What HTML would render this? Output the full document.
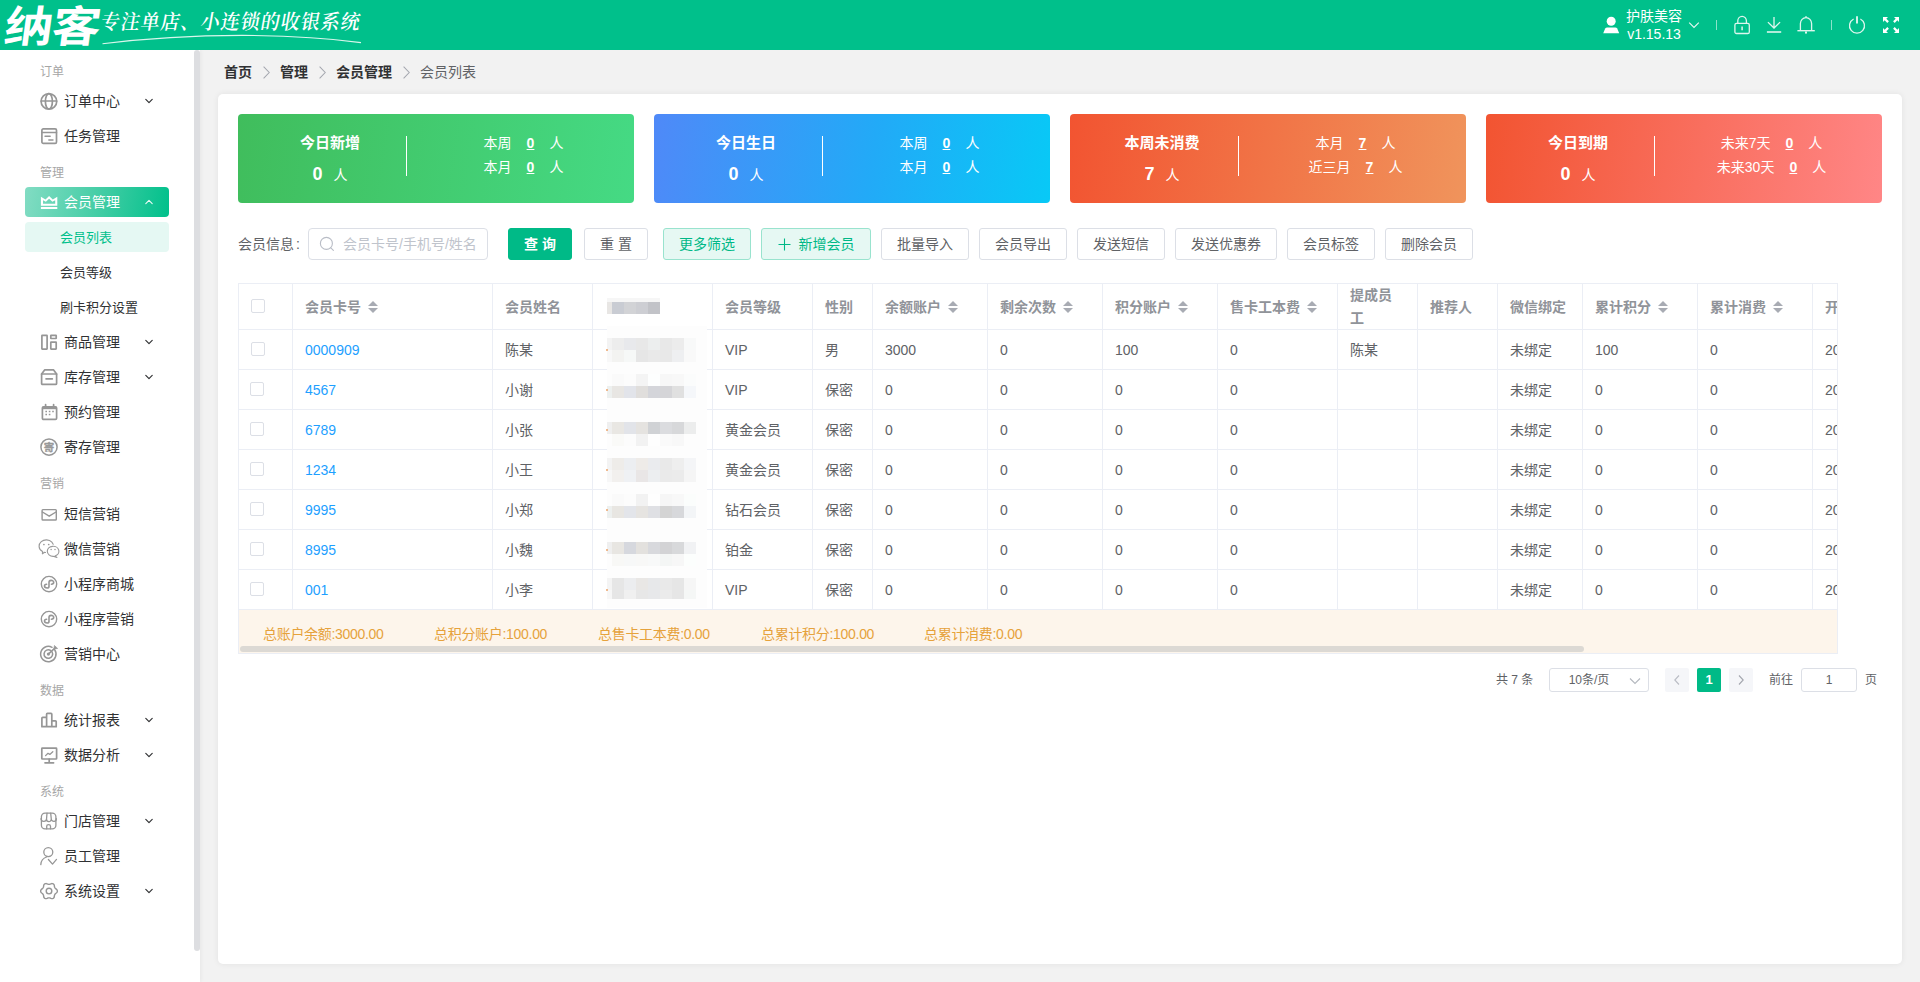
<!DOCTYPE html>
<html lang="zh-CN">
<head>
<meta charset="utf-8">
<title>会员列表</title>
<style>
*{box-sizing:border-box;margin:0;padding:0}
html,body{width:1920px;height:982px;overflow:hidden;background:#f2f2f2}
body{font-family:"Liberation Sans","Noto Sans CJK SC",sans-serif;font-size:14px;color:#606266;position:relative}
.abs{position:absolute}
/* header */
#hd{position:absolute;z-index:2;left:0;top:0;width:1920px;height:50px;background:#00c08b;color:#fff}
#logo{position:absolute;left:1px;top:-1px;font-family:"Liberation Sans","Noto Sans CJK SC",sans-serif;font-weight:700;font-size:43px;line-height:56px;letter-spacing:-1px;transform:scaleX(1.13) skewX(-7deg);transform-origin:left bottom;white-space:nowrap}
#slogan{position:absolute;left:101px;top:9px;font-family:"Liberation Serif","Noto Serif CJK SC",serif;font-weight:600;font-size:19px;line-height:28px;letter-spacing:1px;transform:skewX(-10deg) scaleY(1.08);transform-origin:left center;white-space:nowrap}
#hd svg{position:absolute;overflow:visible}
.uname{position:absolute;left:1614px;width:80px;text-align:center;font-size:14px;line-height:18px;white-space:nowrap}
.hdiv{position:absolute;top:20px;width:1px;height:10px;background:rgba(255,255,255,.55)}
/* sidebar */
#sb{position:absolute;left:0;top:50px;width:200px;height:932px;background:#fff;box-shadow:1px 0 4px rgba(0,0,0,.05)}
#sbthumb{position:absolute;left:194px;top:0;width:6px;height:901px;background:#dddee1;border-radius:3px}
.grp{position:absolute;left:40px;font-size:12px;line-height:16px;color:#a6a6a6}
.mi{position:absolute;left:25px;width:144px;height:30px;border-radius:4px;font-size:14px;line-height:30px;color:#303133;white-space:nowrap}
.mi svg.ic{position:absolute;left:15px;top:6px;width:18px;height:18px;overflow:visible;fill:none;stroke:#969696;stroke-width:1.7;stroke-linecap:round;stroke-linejoin:round}
.mi .t{position:absolute;left:39px;top:0}
.mi svg.ar{position:absolute;left:120px;top:11px;width:8px;height:8px;fill:none;stroke:#303133;stroke-width:1.15;stroke-linecap:round;stroke-linejoin:round}
.mi.on{background:linear-gradient(100deg,#82dcc3 0%,#3fcca3 55%,#00c08b 100%);color:#fff}
.mi.on svg.ic{stroke:#fff}
.mi.on svg.ar{stroke:#fff;stroke-width:1.1;opacity:.92}
.si{position:absolute;left:25px;width:144px;height:30px;border-radius:4px;font-size:13px;line-height:32px;color:#303133;padding-left:35px;white-space:nowrap}
.si.on{background:#e5f8f3;color:#00c08b}
/* main */
#bc{position:absolute;left:224px;top:62px;font-size:14px;line-height:20px;white-space:nowrap;color:#606266}
#bc b{color:#303133;font-weight:700}
#bc i{display:inline-block;width:28px;height:20px;vertical-align:top;position:relative}
#bc i svg{position:absolute;left:11px;top:3.5px}
#card{position:absolute;left:218px;top:94px;width:1684px;height:870px;background:#fff;border-radius:5px;box-shadow:0 0 6px rgba(0,0,0,.07)}

/* stats */
.stat{position:absolute;top:114px;width:396px;height:89px;border-radius:4px;color:#fff}
.stat .sl{position:absolute;left:16px;top:0;width:152px;text-align:center}
.stat .st{position:absolute;left:0;width:152px;top:18px;font-size:15px;line-height:22px;font-weight:700;white-space:nowrap}
.stat .sn{position:absolute;left:0;width:152px;top:46px;line-height:28px;white-space:nowrap}
.stat .sn b{font-size:18px;font-weight:700;margin-right:11px;vertical-align:baseline}
.stat .sn span{font-size:14px}
.stat .sd{position:absolute;left:168px;top:22px;width:1px;height:40px;background:#fff}
.stat .srs{position:absolute;left:169px;width:233px;top:17px;text-align:center}
.stat .sr{height:24px;line-height:24px;font-size:14px;white-space:nowrap}
.stat .sr b{font-weight:700;text-decoration:underline;margin:0 15px}
/* toolbar */
.lbl{position:absolute;line-height:32px;font-size:14px;color:#606266;white-space:nowrap}
.inp{position:absolute;height:32px;border:1px solid #dcdfe6;border-radius:4px;background:#fff;line-height:30px;font-size:14px;color:#c0c4cc;white-space:nowrap}
.inp svg{position:absolute;left:10px;top:7px}
.inp span{position:absolute;left:34px;top:0}
.btn{position:absolute;top:228px;height:32px;border:1px solid #dcdfe6;border-radius:3px;background:#fff;color:#606266;font-size:14px;line-height:30px;text-align:center;white-space:nowrap}
.btn.pri{background:#00ba87;border-color:#00ba87;color:#fff;font-weight:700}
.btn.lt{background:#e6f8f3;border-color:#99e3ce;color:#00b887}
.btn svg{margin-right:8px;vertical-align:-1.5px}
/* table */
#tw{position:absolute;left:238px;top:283px;width:1600px;height:371px;border:1px solid #ebeef5;overflow:hidden;background:#fff}
#tb{position:absolute;left:0;top:0;border-collapse:separate;border-spacing:0;table-layout:fixed;width:1734px;font-size:14px;color:#606266}
#tb th,#tb td{border-right:1px solid #ebeef5;border-bottom:1px solid #ebeef5;padding:0;text-align:left;vertical-align:middle;overflow:hidden;white-space:nowrap}
#tb th{height:46px;color:#909399;font-weight:700;line-height:23px}
#tb td{height:40px;line-height:23px}
#tb .c{padding-left:12px;position:relative;top:1px}
#tb .lk{color:#1e9fff}
#tb .ck{padding-left:12px}
#tb tr+tr td.ck{padding-left:11px}
.cb{display:block;width:14px;height:14px;border:1px solid #dcdfe6;border-radius:2px;background:#fff;position:relative;top:-1px}
.so{display:inline-block;position:relative;width:10px;height:14px;margin-left:7px;vertical-align:-2px}
.so:before,.so:after{content:"";position:absolute;left:0;border:5px solid transparent}
.so:before{top:-4px;border-bottom-color:#a8abb3}
.so:after{top:8px;border-top-color:#a8abb3}
#mz{position:absolute;left:0;top:0}
#mz i{position:absolute;display:block}
#sum{position:absolute;left:0;top:326px;width:1600px;height:43px;background:#fdf5eb;color:#e6a23c;font-size:14px;line-height:46px;white-space:nowrap;padding-left:0}
#sum span{position:absolute;top:1px;letter-spacing:-0.3px}
#hs{position:absolute;left:1px;top:36px;width:1344px;height:6px;border-radius:3px;background:#dcd9d4}
/* pagination */
.pg{position:absolute;height:24px;line-height:24px;font-size:12px;color:#606266;white-space:nowrap}
.psel{position:absolute;width:100px;height:24px;border:1px solid #dcdfe6;border-radius:3px;font-size:12px;line-height:22px;color:#606266;background:#fff}
.psel span{position:absolute;left:0;width:78px;text-align:center}
.psel svg{position:absolute;left:79px;top:8px}
.pb{position:absolute;width:24px;height:24px;border-radius:2px;background:#f5f6f9;color:#606266;font-size:13px;font-weight:700;line-height:24px;text-align:center}
.pb svg{position:absolute;left:8px;top:6px}
.pb.on{background:#00ba87;color:#fff}
.pin{position:absolute;width:56px;height:24px;border:1px solid #dcdfe6;border-radius:3px;font-size:12px;line-height:22px;color:#606266;text-align:center;background:#fff}
</style>
</head>
<body>
<div id="hd">
  <div id="logo">纳客</div>
  <div id="slogan">专注单店、小连锁的收银系统</div>
  <svg style="left:102px;top:34px" width="262" height="12" viewBox="0 0 262 12"><path d="M0.5 9.8 C55 3 100 1.5 140 1.4 C185 1.5 225 4 259 8.6" fill="none" stroke="#d9f6ec" stroke-width="1.1"/></svg>
  <svg style="left:1602px;top:16px" width="18" height="18" viewBox="0 0 18 18"><circle cx="9.2" cy="5.3" r="4.5" fill="#fff"/><path d="M1.2 17.2 L3.2 12.6 Q3.8 11.4 5.2 11.4 H13.2 Q14.6 11.4 15.2 12.6 L17.2 17.2 Z" fill="#fff"/></svg>
  <div class="uname" style="top:7px">护肤美容</div>
  <div class="uname" style="top:25px">v1.15.13</div>
  <svg style="left:1688px;top:21px" width="12" height="8" viewBox="0 0 12 8"><path d="M1.2 1.7 L6 6.5 L10.8 1.7" fill="none" stroke="#e9faf4" stroke-width="1.1"/></svg>
  <div class="hdiv" style="left:1716px"></div>
  <svg style="left:1733px;top:15px" width="18" height="20" viewBox="0 0 18 20" fill="none" stroke="#ddf6ee" stroke-width="1.3"><rect x="1.9" y="8.3" width="14.4" height="10.2" rx="1.6"/><path d="M4.8 8.2 V5.8 A4.2 4.4 0 0 1 13.4 5.8 V8.2"/><path d="M9.1 11.4 V15.3" stroke-width="1.5"/></svg>
  <svg style="left:1765px;top:15px" width="18" height="20" viewBox="0 0 18 20" fill="none" stroke="#ddf6ee" stroke-width="1.3"><path d="M9 2 V12.8 M2.9 7.1 L9 13 L15.1 7.1"/><path d="M1.9 17 H16.2" stroke-width="1.6"/></svg>
  <svg style="left:1796px;top:15px" width="20" height="20" viewBox="0 0 20 20" fill="none" stroke="#ddf6ee" stroke-width="1.3"><path d="M4.4 15.6 V8.6 A5.6 6 0 0 1 15.6 8.6 V15.6"/><path d="M1.4 15.7 H18.8" stroke-width="1.4"/><path d="M10 1.2 V2.6 M9 17.2 H11" stroke-width="1.6"/><path d="M9.3 18.3 H10.7" stroke-width="1"/></svg>
  <div class="hdiv" style="left:1831px"></div>
  <svg style="left:1847px;top:15px" width="20" height="20" viewBox="0 0 20 20" fill="none" stroke="#ddf6ee" stroke-width="1.3"><path d="M6.6 4 A7.5 7.5 0 1 0 13.4 4"/><path d="M10 1.2 V8.6" stroke-width="1.9"/></svg>
  <svg style="left:1882px;top:16px" width="18" height="18" viewBox="0 0 18 18" fill="#fff" stroke="none"><path d="M1 1 H6 L4.3 2.7 L6.9 5.3 L5.3 6.9 L2.7 4.3 L1 6 Z"/><path d="M17 1 V6 L15.3 4.3 L12.7 6.9 L11.1 5.3 L13.7 2.7 L12 1 Z"/><path d="M1 17 V12 L2.7 13.7 L5.3 11.1 L6.9 12.7 L4.3 15.3 L6 17 Z"/><path d="M17 17 H12 L13.7 15.3 L11.1 12.7 L12.7 11.1 L15.3 13.7 L17 12 Z"/></svg>
</div>
<div id="sb">
  <div id="sbthumb"></div>
  <div class="grp" style="top:14px">订单</div>
  <div class="mi" style="top:36px"><svg class="ic" viewBox="0 0 18 18"><circle cx="8.9" cy="9.4" r="7.8"/><ellipse cx="8.9" cy="9.4" rx="3.5" ry="7.8"/><path d="M1.2 9 H16.6"/></svg><span class="t">订单中心</span><svg class="ar" viewBox="0 0 8 8"><path d="M0.8 2.4 L4 5.6 L7.2 2.4"/></svg></div>
  <div class="mi" style="top:71px"><svg class="ic" viewBox="0 0 18 18"><rect x="1.9" y="1.9" width="14.6" height="14.4" rx="1.4"/><path d="M2 5.5 H16.4"/><path d="M5 9.2 H10.2 M8.8 13 H13" stroke-width="1.4"/></svg><span class="t">任务管理</span></div>
  <div class="grp" style="top:115px">管理</div>
  <div class="mi on" style="top:137px"><svg class="ic" viewBox="0 0 18 18"><path fill-rule="evenodd" fill="#fff" stroke="none" d="M0.9 3.7 L5.5 6.4 L9.1 2.9 L12.8 6.4 L17.3 3.7 V12.7 H0.9 Z M3 7.3 L5.85 8.85 L9.1 5.7 L12.4 8.85 L15.2 7.3 V10.7 H3 Z M0.9 14.1 H17.3 V15.9 H0.9 Z"/></svg><span class="t">会员管理</span><svg class="ar" viewBox="0 0 8 8"><path d="M0.8 5.6 L4 2.4 L7.2 5.6"/></svg></div>
  <div class="si on" style="top:172px">会员列表</div>
  <div class="si" style="top:207px">会员等级</div>
  <div class="si" style="top:242px">刷卡积分设置</div>
  <div class="mi" style="top:277px"><svg class="ic" viewBox="0 0 18 18"><rect x="1.9" y="2.4" width="5.2" height="13.7" rx="0.3" stroke-linejoin="miter"/><rect x="10.8" y="2.4" width="5.4" height="3.1" rx="0.3" stroke-linejoin="miter"/><rect x="10.8" y="9.1" width="5.4" height="7" rx="0.3" stroke-linejoin="miter"/></svg><span class="t">商品管理</span><svg class="ar" viewBox="0 0 8 8"><path d="M0.8 2.4 L4 5.6 L7.2 2.4"/></svg></div>
  <div class="mi" style="top:312px"><svg class="ic" viewBox="0 0 18 18"><path d="M1.6 6 L4.6 1.9 H13.6 L16.6 6"/><path d="M1.6 6 H16.6 V15.4 Q16.6 16.4 15.6 16.4 H2.6 Q1.6 16.4 1.6 15.4 Z"/><path d="M6 10.9 H12.4" stroke-width="1.6"/></svg><span class="t">库存管理</span><svg class="ar" viewBox="0 0 8 8"><path d="M0.8 2.4 L4 5.6 L7.2 2.4"/></svg></div>
  <div class="mi" style="top:347px"><svg class="ic" viewBox="0 0 18 18"><rect x="2.4" y="3.8" width="14.2" height="12.6" rx="1.2"/><path d="M2.4 5 H16.6" stroke-width="2.4" stroke-linecap="butt"/><path d="M5.6 1.6 V4 M13.6 1.6 V4"/><path d="M5.4 8.4 H7 M8.8 8.4 H10.4 M12.2 8.4 H13.8 M5.4 11.6 H7 M8.8 11.6 H10.4" stroke-width="1.5" stroke-linecap="butt"/></svg><span class="t">预约管理</span></div>
  <div class="mi" style="top:382px"><svg class="ic" viewBox="0 0 18 18"><circle cx="9" cy="9.1" r="8.1" stroke-width="1.5"/><text x="9" y="12.9" text-anchor="middle" font-size="10.5" font-weight="700" stroke="#999" stroke-width="0.35" fill="#999" font-family="Liberation Sans,Noto Sans CJK SC,sans-serif">寄</text></svg><span class="t">寄存管理</span></div>
  <div class="grp" style="top:426px">营销</div>
  <div class="mi" style="top:449px"><svg class="ic" viewBox="0 0 18 18"><rect x="2.1" y="4.6" width="14.2" height="10.4" rx="0.8" stroke-width="1.4"/><path d="M2.4 7 L9.2 11.2 L16 7" stroke-width="1.4"/></svg><span class="t">短信营销</span></div>
  <div class="mi" style="top:484px"><svg class="ic" viewBox="0 0 18 18"><g stroke="#9a9a9a" stroke-width="1.15"><path d="M-0.9 6.4 A7.2 6.3 0 1 1 4.6 12.3 L2.4 13.8 L2.6 11.6 A7.2 6.3 0 0 1 -0.9 6.4 Z"/><ellipse cx="13.1" cy="11.3" rx="6.6" ry="5.8" fill="#fff" stroke="#fff" stroke-width="1.6"/><path d="M7.3 11.3 A5.8 5 0 1 1 15 16 L16.9 17.4 L13.1 16.3 A5.8 5 0 0 1 7.3 11.3 Z" fill="#fff"/></g><g fill="#999" stroke="none"><circle cx="3.9" cy="4.5" r="0.85"/><circle cx="8.7" cy="4.5" r="0.85"/><circle cx="11.1" cy="9.5" r="0.75"/><circle cx="15" cy="9.5" r="0.75"/></g></svg><span class="t">微信营销</span></div>
  <div class="mi" style="top:519px"><svg class="ic" viewBox="0 0 18 18"><circle cx="9" cy="9.1" r="7.7" stroke-width="1.4"/><path d="M11.4 9.3 C12.6 9.2 13.7 8.4 13.7 7.3 C13.7 6 12.4 5.3 11 5.4 C9.6 5.5 9 6.4 9 7.6 V11.2 C9 12.3 8.4 13 7.1 13 C5.6 13 4.5 12.2 4.5 11.1 C4.5 10 5.4 9.3 6.6 9.2" stroke-width="1.6"/></svg><span class="t">小程序商城</span></div>
  <div class="mi" style="top:554px"><svg class="ic" viewBox="0 0 18 18"><circle cx="9" cy="9.1" r="7.7" stroke-width="1.4"/><path d="M11.4 9.3 C12.6 9.2 13.7 8.4 13.7 7.3 C13.7 6 12.4 5.3 11 5.4 C9.6 5.5 9 6.4 9 7.6 V11.2 C9 12.3 8.4 13 7.1 13 C5.6 13 4.5 12.2 4.5 11.1 C4.5 10 5.4 9.3 6.6 9.2" stroke-width="1.6"/></svg><span class="t">小程序营销</span></div>
  <div class="mi" style="top:589px"><svg class="ic" viewBox="0 0 18 18"><path d="M14.6 4.6 A7.7 7.7 0 1 1 12 2.3" stroke-width="1.5"/><path d="M12 6.8 A4.3 4.3 0 1 1 10.6 5.4" stroke-width="1.5"/><circle cx="8.4" cy="9.1" r="1.6" fill="#999" stroke="none"/><path d="M8.6 8.9 L15.4 2.6" stroke-width="1.5"/><path d="M14.4 0.9 L14 3.9 L17.2 3.5 Z" fill="#999" stroke-width="0.8"/></svg><span class="t">营销中心</span></div>
  <div class="grp" style="top:633px">数据</div>
  <div class="mi" style="top:655px"><svg class="ic" viewBox="0 0 18 18"><path d="M1.9 15.7 V7.1 Q1.9 6.3 2.7 6.3 H6.6 M6.6 15.7 V3.2 Q6.6 2.4 7.4 2.4 H11 Q11.8 2.4 11.8 3.2 V15.7 M11.8 9.8 H15.4 Q16.2 9.8 16.2 10.6 V15.7 M1.9 15.7 H16.2"/></svg><span class="t">统计报表</span><svg class="ar" viewBox="0 0 8 8"><path d="M0.8 2.4 L4 5.6 L7.2 2.4"/></svg></div>
  <div class="mi" style="top:690px"><svg class="ic" viewBox="0 0 18 18"><rect x="1.8" y="2.2" width="14.8" height="10.8" rx="0.6"/><path d="M9.2 13.2 V16.6 M5 16.8 H13.6"/><path d="M5.6 9.6 L8 7.3 L9.8 8.4 L12.8 5.8" stroke-width="1.3"/></svg><span class="t">数据分析</span><svg class="ar" viewBox="0 0 8 8"><path d="M0.8 2.4 L4 5.6 L7.2 2.4"/></svg></div>
  <div class="grp" style="top:734px">系统</div>
  <div class="mi" style="top:756px"><svg class="ic" viewBox="0 0 18 18"><rect x="1.4" y="1.1" width="14.5" height="15.8" rx="3.6" stroke-width="1.3"/><path d="M7 1.2 L6.5 7.2 M10.7 1.2 L11.3 7.2 M1 6.6 A2.75 2.6 0 0 0 6.5 7 A2.4 2.6 0 0 0 11.3 7 A2.5 2.6 0 0 0 16.3 6.6" stroke-width="1.3"/><path d="M6.7 16.8 V14.2 Q6.7 12.6 8.6 12.6 Q10.5 12.6 10.5 14.2 V16.8" stroke-width="1.3"/></svg><span class="t">门店管理</span><svg class="ar" viewBox="0 0 8 8"><path d="M0.8 2.4 L4 5.6 L7.2 2.4"/></svg></div>
  <div class="mi" style="top:791px"><svg class="ic" viewBox="0 0 18 18"><circle cx="8.3" cy="5.1" r="4.5" stroke-width="1.3"/><path d="M0.8 17.6 Q1.2 11.6 6.6 10" stroke-width="1.3"/><path d="M8.4 12.5 L12.5 17.1 L16.5 12.4" stroke-width="1.3"/></svg><span class="t">员工管理</span></div>
  <div class="mi" style="top:826px"><svg class="ic" viewBox="0 0 18 18"><path d="M17.35 9.10 L17.24 9.82 L16.92 10.50 L16.29 11.05 L15.63 11.51 L15.19 11.99 L14.85 12.47 L14.59 13.02 L14.41 13.64 L14.34 14.44 L14.17 15.26 L13.75 15.88 L13.18 16.33 L12.50 16.60 L11.75 16.66 L10.95 16.39 L10.23 16.05 L9.59 15.90 L9.00 15.85 L8.41 15.90 L7.77 16.05 L7.05 16.39 L6.25 16.66 L5.50 16.60 L4.83 16.33 L4.25 15.88 L3.83 15.26 L3.66 14.44 L3.59 13.64 L3.41 13.02 L3.15 12.47 L2.81 11.99 L2.37 11.51 L1.71 11.05 L1.08 10.50 L0.76 9.82 L0.65 9.10 L0.76 8.38 L1.08 7.70 L1.71 7.15 L2.37 6.69 L2.81 6.21 L3.15 5.72 L3.41 5.18 L3.59 4.56 L3.66 3.76 L3.83 2.94 L4.25 2.32 L4.82 1.87 L5.50 1.60 L6.25 1.54 L7.05 1.81 L7.77 2.15 L8.41 2.30 L9.00 2.35 L9.59 2.30 L10.23 2.15 L10.95 1.81 L11.75 1.54 L12.50 1.60 L13.18 1.87 L13.75 2.32 L14.17 2.94 L14.34 3.76 L14.41 4.56 L14.59 5.18 L14.85 5.72 L15.19 6.21 L15.63 6.69 L16.29 7.15 L16.92 7.70 L17.24 8.38 Z" stroke-width="1.4"/><circle cx="9" cy="9.1" r="2.8" stroke-width="1.4"/></svg><span class="t">系统设置</span><svg class="ar" viewBox="0 0 8 8"><path d="M0.8 2.4 L4 5.6 L7.2 2.4"/></svg></div>
</div>
<div id="bc"><b>首页</b><i><svg width="7" height="13" viewBox="0 0 7 13"><path d="M0.6 0.6 L6.2 6.5 L0.6 12.4" fill="none" stroke="#a4a7af" stroke-width="1.05"/></svg></i><b>管理</b><i><svg width="7" height="13" viewBox="0 0 7 13"><path d="M0.6 0.6 L6.2 6.5 L0.6 12.4" fill="none" stroke="#a4a7af" stroke-width="1.05"/></svg></i><b>会员管理</b><i><svg width="7" height="13" viewBox="0 0 7 13"><path d="M0.6 0.6 L6.2 6.5 L0.6 12.4" fill="none" stroke="#a4a7af" stroke-width="1.05"/></svg></i>会员列表</div>
<div id="card"></div>
<!--MAIN-->
<div class="stat" style="left:238px;background:linear-gradient(98deg,#40bd5c 0%,#45da84 100%)"><div class="sl"><div class="st">今日新增</div><div class="sn"><b>0</b><span>人</span></div></div><i class="sd"></i><div class="srs"><div class="sr"><span>本周</span><b>0</b><span>人</span></div><div class="sr"><span>本月</span><b>0</b><span>人</span></div></div></div>
<div class="stat" style="left:654px;background:linear-gradient(98deg,#4f89f8 0%,#22aaf7 55%,#08c9f6 100%)"><div class="sl"><div class="st">今日生日</div><div class="sn"><b>0</b><span>人</span></div></div><i class="sd"></i><div class="srs"><div class="sr"><span>本周</span><b>0</b><span>人</span></div><div class="sr"><span>本月</span><b>0</b><span>人</span></div></div></div>
<div class="stat" style="left:1070px;background:linear-gradient(98deg,#f25431 0%,#f0945c 100%)"><div class="sl"><div class="st">本周未消费</div><div class="sn"><b>7</b><span>人</span></div></div><i class="sd"></i><div class="srs"><div class="sr"><span>本月</span><b>7</b><span>人</span></div><div class="sr"><span>近三月</span><b>7</b><span>人</span></div></div></div>
<div class="stat" style="left:1486px;background:linear-gradient(98deg,#f25431 0%,#ff8686 100%)"><div class="sl"><div class="st">今日到期</div><div class="sn"><b>0</b><span>人</span></div></div><i class="sd"></i><div class="srs"><div class="sr"><span>未来7天</span><b>0</b><span>人</span></div><div class="sr"><span>未来30天</span><b>0</b><span>人</span></div></div></div>
<div class="lbl" style="left:238px;top:228px">会员信息<span style="margin-left:2px">:</span></div>
<div class="inp" style="left:308px;top:228px;width:180px"><svg viewBox="0 0 16 16" width="16" height="16"><circle cx="7.4" cy="7.4" r="6" fill="none" stroke="#b9bdc6" stroke-width="1.1"/><path d="M11.8 11.8 L14.4 14.4" stroke="#b9bdc6" stroke-width="1.1" stroke-linecap="round"/></svg><span>会员卡号/手机号/姓名</span></div>
<div class="btn pri" style="left:508px;width:64px">查 询</div>
<div class="btn " style="left:584px;width:64px">重 置</div>
<div class="btn lt" style="left:663px;width:88px">更多筛选</div>
<div class="btn lt" style="left:761px;width:110px"><svg viewBox="0 0 13 13" width="13" height="13"><path d="M6.5 0.5 V12.5 M0.5 6.5 H12.5" stroke="#00b887" stroke-width="1.1" fill="none"/></svg>新增会员</div>
<div class="btn " style="left:881px;width:88px">批量导入</div>
<div class="btn " style="left:979px;width:88px">会员导出</div>
<div class="btn " style="left:1077px;width:88px">发送短信</div>
<div class="btn " style="left:1175px;width:102px">发送优惠券</div>
<div class="btn " style="left:1287px;width:88px">会员标签</div>
<div class="btn " style="left:1385px;width:88px">删除会员</div>
<div id="tw"><table id="tb"><colgroup><col style="width:54px"><col style="width:200px"><col style="width:100px"><col style="width:120px"><col style="width:100px"><col style="width:60px"><col style="width:115px"><col style="width:115px"><col style="width:115px"><col style="width:120px"><col style="width:80px"><col style="width:80px"><col style="width:85px"><col style="width:115px"><col style="width:115px"><col style="width:160px"></colgroup><thead><tr><th class="ck"><i class="cb"></i></th><th><div class="c">会员卡号<i class="so"></i></div></th><th><div class="c">会员姓名</div></th><th><div class="c"></div></th><th><div class="c">会员等级</div></th><th><div class="c">性别</div></th><th><div class="c">余额账户<i class="so"></i></div></th><th><div class="c">剩余次数<i class="so"></i></div></th><th><div class="c">积分账户<i class="so"></i></div></th><th><div class="c">售卡工本费<i class="so"></i></div></th><th><div class="c"><div style="height:45px;position:relative;top:-1px">提成员<br>工</div></div></th><th><div class="c">推荐人</div></th><th><div class="c">微信绑定</div></th><th><div class="c">累计积分<i class="so"></i></div></th><th><div class="c">累计消费<i class="so"></i></div></th><th><div class="c">开卡时间<i class="so"></i></div></th></tr></thead><tbody><tr><td class="ck"><i class="cb"></i></td><td><div class="c lk">0000909</div></td><td><div class="c">陈某</div></td><td></td><td><div class="c">VIP</div></td><td><div class="c">男</div></td><td><div class="c">3000</div></td><td><div class="c">0</div></td><td><div class="c">100</div></td><td><div class="c">0</div></td><td><div class="c">陈某</div></td><td><div class="c"></div></td><td><div class="c">未绑定</div></td><td><div class="c">100</div></td><td><div class="c">0</div></td><td><div class="c">2021-03-02</div></td></tr><tr><td class="ck"><i class="cb"></i></td><td><div class="c lk">4567</div></td><td><div class="c">小谢</div></td><td></td><td><div class="c">VIP</div></td><td><div class="c">保密</div></td><td><div class="c">0</div></td><td><div class="c">0</div></td><td><div class="c">0</div></td><td><div class="c">0</div></td><td><div class="c"></div></td><td><div class="c"></div></td><td><div class="c">未绑定</div></td><td><div class="c">0</div></td><td><div class="c">0</div></td><td><div class="c">2021-03-02</div></td></tr><tr><td class="ck"><i class="cb"></i></td><td><div class="c lk">6789</div></td><td><div class="c">小张</div></td><td></td><td><div class="c">黄金会员</div></td><td><div class="c">保密</div></td><td><div class="c">0</div></td><td><div class="c">0</div></td><td><div class="c">0</div></td><td><div class="c">0</div></td><td><div class="c"></div></td><td><div class="c"></div></td><td><div class="c">未绑定</div></td><td><div class="c">0</div></td><td><div class="c">0</div></td><td><div class="c">2021-03-01</div></td></tr><tr><td class="ck"><i class="cb"></i></td><td><div class="c lk">1234</div></td><td><div class="c">小王</div></td><td></td><td><div class="c">黄金会员</div></td><td><div class="c">保密</div></td><td><div class="c">0</div></td><td><div class="c">0</div></td><td><div class="c">0</div></td><td><div class="c">0</div></td><td><div class="c"></div></td><td><div class="c"></div></td><td><div class="c">未绑定</div></td><td><div class="c">0</div></td><td><div class="c">0</div></td><td><div class="c">2021-03-01</div></td></tr><tr><td class="ck"><i class="cb"></i></td><td><div class="c lk">9995</div></td><td><div class="c">小郑</div></td><td></td><td><div class="c">钻石会员</div></td><td><div class="c">保密</div></td><td><div class="c">0</div></td><td><div class="c">0</div></td><td><div class="c">0</div></td><td><div class="c">0</div></td><td><div class="c"></div></td><td><div class="c"></div></td><td><div class="c">未绑定</div></td><td><div class="c">0</div></td><td><div class="c">0</div></td><td><div class="c">2021-03-01</div></td></tr><tr><td class="ck"><i class="cb"></i></td><td><div class="c lk">8995</div></td><td><div class="c">小魏</div></td><td></td><td><div class="c">铂金</div></td><td><div class="c">保密</div></td><td><div class="c">0</div></td><td><div class="c">0</div></td><td><div class="c">0</div></td><td><div class="c">0</div></td><td><div class="c"></div></td><td><div class="c"></div></td><td><div class="c">未绑定</div></td><td><div class="c">0</div></td><td><div class="c">0</div></td><td><div class="c">2021-03-01</div></td></tr><tr><td class="ck"><i class="cb"></i></td><td><div class="c lk">001</div></td><td><div class="c">小李</div></td><td></td><td><div class="c">VIP</div></td><td><div class="c">保密</div></td><td><div class="c">0</div></td><td><div class="c">0</div></td><td><div class="c">0</div></td><td><div class="c">0</div></td><td><div class="c"></div></td><td><div class="c"></div></td><td><div class="c">未绑定</div></td><td><div class="c">0</div></td><td><div class="c">0</div></td><td><div class="c">2021-03-01</div></td></tr></tbody></table><div id="mz"><i style="left:368px;top:42px;width:100px;height:282px;background:#fdfdfd"></i><i style="left:368px;top:14px;width:53px;height:4px;background:#f6f6f6"></i><i style="left:368px;top:18px;width:5px;height:12px;background:#e8e6e4"></i><i style="left:373px;top:18px;width:12px;height:12px;background:#c9ccd3"></i><i style="left:385px;top:18px;width:12px;height:12px;background:#d2d3d6"></i><i style="left:397px;top:18px;width:12px;height:12px;background:#cdced3"></i><i style="left:409px;top:18px;width:12px;height:12px;background:#c2c3c8"></i><i style="left:368px;top:54px;width:5px;height:12px;background:#f3f3f3"></i><i style="left:373px;top:54px;width:12px;height:12px;background:#ededed"></i><i style="left:385px;top:54px;width:12px;height:12px;background:#e8e9ec"></i><i style="left:397px;top:54px;width:12px;height:12px;background:#e8e8e8"></i><i style="left:409px;top:54px;width:12px;height:12px;background:#eceeee"></i><i style="left:421px;top:54px;width:12px;height:12px;background:#e8e8e8"></i><i style="left:433px;top:54px;width:12px;height:12px;background:#ececec"></i><i style="left:445px;top:54px;width:12px;height:12px;background:#f8f9f9"></i><i style="left:368px;top:66px;width:5px;height:12px;background:#f8f8f8"></i><i style="left:373px;top:66px;width:12px;height:12px;background:#f3f3f1"></i><i style="left:385px;top:66px;width:12px;height:12px;background:#f6f8f7"></i><i style="left:397px;top:66px;width:12px;height:12px;background:#e6e6e6"></i><i style="left:409px;top:66px;width:12px;height:12px;background:#e9e9e9"></i><i style="left:421px;top:66px;width:12px;height:12px;background:#e8e8e8"></i><i style="left:433px;top:66px;width:12px;height:12px;background:#eeeff1"></i><i style="left:445px;top:66px;width:12px;height:12px;background:#f9f9f9"></i><i style="left:373px;top:90px;width:12px;height:12px;background:#fafafa"></i><i style="left:385px;top:90px;width:12px;height:12px;background:#fcfcfc"></i><i style="left:397px;top:90px;width:12px;height:12px;background:#f4f4f4"></i><i style="left:409px;top:90px;width:12px;height:12px;background:#fdfefe"></i><i style="left:421px;top:90px;width:12px;height:12px;background:#f7f7f7"></i><i style="left:433px;top:90px;width:12px;height:12px;background:#f8f8f8"></i><i style="left:445px;top:90px;width:12px;height:12px;background:#fbfcfc"></i><i style="left:368px;top:102px;width:5px;height:12px;background:#edf0ef"></i><i style="left:373px;top:102px;width:12px;height:12px;background:#e8e6e3"></i><i style="left:385px;top:102px;width:12px;height:12px;background:#e2e4ea"></i><i style="left:397px;top:102px;width:12px;height:12px;background:#e0dedc"></i><i style="left:409px;top:102px;width:12px;height:12px;background:#d4d5da"></i><i style="left:421px;top:102px;width:12px;height:12px;background:#d5d5d8"></i><i style="left:433px;top:102px;width:12px;height:12px;background:#e0e0e0"></i><i style="left:445px;top:102px;width:12px;height:12px;background:#f5f7fa"></i><i style="left:368px;top:138px;width:5px;height:12px;background:#efefef"></i><i style="left:373px;top:138px;width:12px;height:12px;background:#e9e7e3"></i><i style="left:385px;top:138px;width:12px;height:12px;background:#e2e4e9"></i><i style="left:397px;top:138px;width:12px;height:12px;background:#e5e3e0"></i><i style="left:409px;top:138px;width:12px;height:12px;background:#d0d2d5"></i><i style="left:421px;top:138px;width:12px;height:12px;background:#dbdcdf"></i><i style="left:433px;top:138px;width:12px;height:12px;background:#d7d8da"></i><i style="left:445px;top:138px;width:12px;height:12px;background:#eceded"></i><i style="left:373px;top:150px;width:12px;height:12px;background:#fafaf8"></i><i style="left:385px;top:150px;width:12px;height:12px;background:#fcfcfc"></i><i style="left:397px;top:150px;width:12px;height:12px;background:#f2f2f2"></i><i style="left:409px;top:150px;width:12px;height:12px;background:#fefefe"></i><i style="left:421px;top:150px;width:12px;height:12px;background:#fafafa"></i><i style="left:433px;top:150px;width:12px;height:12px;background:#f8f8f8"></i><i style="left:445px;top:150px;width:12px;height:12px;background:#fdfdfd"></i><i style="left:368px;top:174px;width:5px;height:12px;background:#f3f3f3"></i><i style="left:373px;top:174px;width:12px;height:12px;background:#eeece9"></i><i style="left:385px;top:174px;width:12px;height:12px;background:#eceef1"></i><i style="left:397px;top:174px;width:12px;height:12px;background:#eeebe8"></i><i style="left:409px;top:174px;width:12px;height:12px;background:#eaebee"></i><i style="left:421px;top:174px;width:12px;height:12px;background:#e9e9e9"></i><i style="left:433px;top:174px;width:12px;height:12px;background:#eeeeee"></i><i style="left:445px;top:174px;width:12px;height:12px;background:#f4f5f7"></i><i style="left:368px;top:186px;width:5px;height:12px;background:#f7f7f7"></i><i style="left:373px;top:186px;width:12px;height:12px;background:#f2f0ee"></i><i style="left:385px;top:186px;width:12px;height:12px;background:#eff1f4"></i><i style="left:397px;top:186px;width:12px;height:12px;background:#e9e6e6"></i><i style="left:409px;top:186px;width:12px;height:12px;background:#eceef0"></i><i style="left:421px;top:186px;width:12px;height:12px;background:#eaeaea"></i><i style="left:433px;top:186px;width:12px;height:12px;background:#ebebeb"></i><i style="left:445px;top:186px;width:12px;height:12px;background:#f5f5f5"></i><i style="left:373px;top:210px;width:12px;height:12px;background:#fafafa"></i><i style="left:385px;top:210px;width:12px;height:12px;background:#fcfcfc"></i><i style="left:397px;top:210px;width:12px;height:12px;background:#f2f2f2"></i><i style="left:409px;top:210px;width:12px;height:12px;background:#fefefe"></i><i style="left:421px;top:210px;width:12px;height:12px;background:#f6f6f6"></i><i style="left:433px;top:210px;width:12px;height:12px;background:#f8f8f8"></i><i style="left:445px;top:210px;width:12px;height:12px;background:#fbfdfc"></i><i style="left:368px;top:222px;width:5px;height:12px;background:#edf0ef"></i><i style="left:373px;top:222px;width:12px;height:12px;background:#e8e6e2"></i><i style="left:385px;top:222px;width:12px;height:12px;background:#e3e5ea"></i><i style="left:397px;top:222px;width:12px;height:12px;background:#e6e4e1"></i><i style="left:409px;top:222px;width:12px;height:12px;background:#dfe0e4"></i><i style="left:421px;top:222px;width:12px;height:12px;background:#d4d4d4"></i><i style="left:433px;top:222px;width:12px;height:12px;background:#d7d8db"></i><i style="left:445px;top:222px;width:12px;height:12px;background:#f3f5f7"></i><i style="left:368px;top:258px;width:5px;height:12px;background:#efefef"></i><i style="left:373px;top:258px;width:12px;height:12px;background:#e8e6e2"></i><i style="left:385px;top:258px;width:12px;height:12px;background:#d6d8de"></i><i style="left:397px;top:258px;width:12px;height:12px;background:#e3e1de"></i><i style="left:409px;top:258px;width:12px;height:12px;background:#d8d9dd"></i><i style="left:421px;top:258px;width:12px;height:12px;background:#d3d3d5"></i><i style="left:433px;top:258px;width:12px;height:12px;background:#d8d9db"></i><i style="left:445px;top:258px;width:12px;height:12px;background:#f1f2f4"></i><i style="left:373px;top:270px;width:12px;height:12px;background:#f8f8f6"></i><i style="left:385px;top:270px;width:12px;height:12px;background:#f7f8f8"></i><i style="left:397px;top:270px;width:12px;height:12px;background:#f8f8f7"></i><i style="left:409px;top:270px;width:12px;height:12px;background:#f8f9f9"></i><i style="left:421px;top:270px;width:12px;height:12px;background:#f4f6f5"></i><i style="left:433px;top:270px;width:12px;height:12px;background:#f7f7f7"></i><i style="left:445px;top:270px;width:12px;height:12px;background:#fcfefd"></i><i style="left:368px;top:294px;width:5px;height:12px;background:#f4f4f4"></i><i style="left:373px;top:294px;width:12px;height:12px;background:#e6e6e6"></i><i style="left:385px;top:294px;width:12px;height:12px;background:#ecedef"></i><i style="left:397px;top:294px;width:12px;height:12px;background:#e9e7e5"></i><i style="left:409px;top:294px;width:12px;height:12px;background:#e7e8ea"></i><i style="left:421px;top:294px;width:12px;height:12px;background:#e9e9e9"></i><i style="left:433px;top:294px;width:12px;height:12px;background:#e6e6e6"></i><i style="left:445px;top:294px;width:12px;height:12px;background:#f6f6f6"></i><i style="left:368px;top:306px;width:5px;height:9px;background:#f7f7f7"></i><i style="left:373px;top:306px;width:12px;height:9px;background:#e6e6e6"></i><i style="left:385px;top:306px;width:12px;height:9px;background:#f0f0f0"></i><i style="left:397px;top:306px;width:12px;height:9px;background:#e7e7e7"></i><i style="left:409px;top:306px;width:12px;height:9px;background:#e7e8ea"></i><i style="left:421px;top:306px;width:12px;height:9px;background:#ebebeb"></i><i style="left:433px;top:306px;width:12px;height:9px;background:#e6e6e6"></i><i style="left:445px;top:306px;width:12px;height:9px;background:#f5f7f6"></i><i style="left:367px;top:65px;width:2px;height:2px;background:#eda66e;border-radius:1px"></i><i style="left:367px;top:105px;width:2px;height:2px;background:#eda66e;border-radius:1px"></i><i style="left:367px;top:145px;width:2px;height:2px;background:#eda66e;border-radius:1px"></i><i style="left:367px;top:185px;width:2px;height:2px;background:#eda66e;border-radius:1px"></i><i style="left:367px;top:225px;width:2px;height:2px;background:#eda66e;border-radius:1px"></i><i style="left:367px;top:265px;width:2px;height:2px;background:#eda66e;border-radius:1px"></i><i style="left:367px;top:305px;width:2px;height:2px;background:#eda66e;border-radius:1px"></i></div><div id="sum"><span style="left:24px">总账户余额:3000.00</span><span style="left:195px">总积分账户:100.00</span><span style="left:359px">总售卡工本费:0.00</span><span style="left:522px">总累计积分:100.00</span><span style="left:685px">总累计消费:0.00</span><i id="hs"></i></div></div>
<div class="pg" style="left:1496px;top:668px">共 7 条</div>
<div class="psel" style="left:1549px;top:668px"><span>10条/页</span><svg viewBox="0 0 12 8" width="12" height="8"><path d="M1 1.5 L6 6.5 L11 1.5" fill="none" stroke="#b4b8bf" stroke-width="1.1"/></svg></div>
<div class="pb" style="left:1665px;top:668px"><svg viewBox="0 0 8 12" width="8" height="12"><path d="M6 1.5 L1.8 6 L6 10.5" fill="none" stroke="#b9bcc4" stroke-width="1.1"/></svg></div>
<div class="pb on" style="left:1697px;top:668px">1</div>
<div class="pb" style="left:1729px;top:668px"><svg viewBox="0 0 8 12" width="8" height="12"><path d="M2 1.5 L6.2 6 L2 10.5" fill="none" stroke="#a3a6ad" stroke-width="1.1"/></svg></div>
<div class="pg" style="left:1769px;top:668px">前往</div>
<div class="pin" style="left:1801px;top:668px">1</div>
<div class="pg" style="left:1865px;top:668px">页</div>
<!--/MAIN-->
</body>
</html>
